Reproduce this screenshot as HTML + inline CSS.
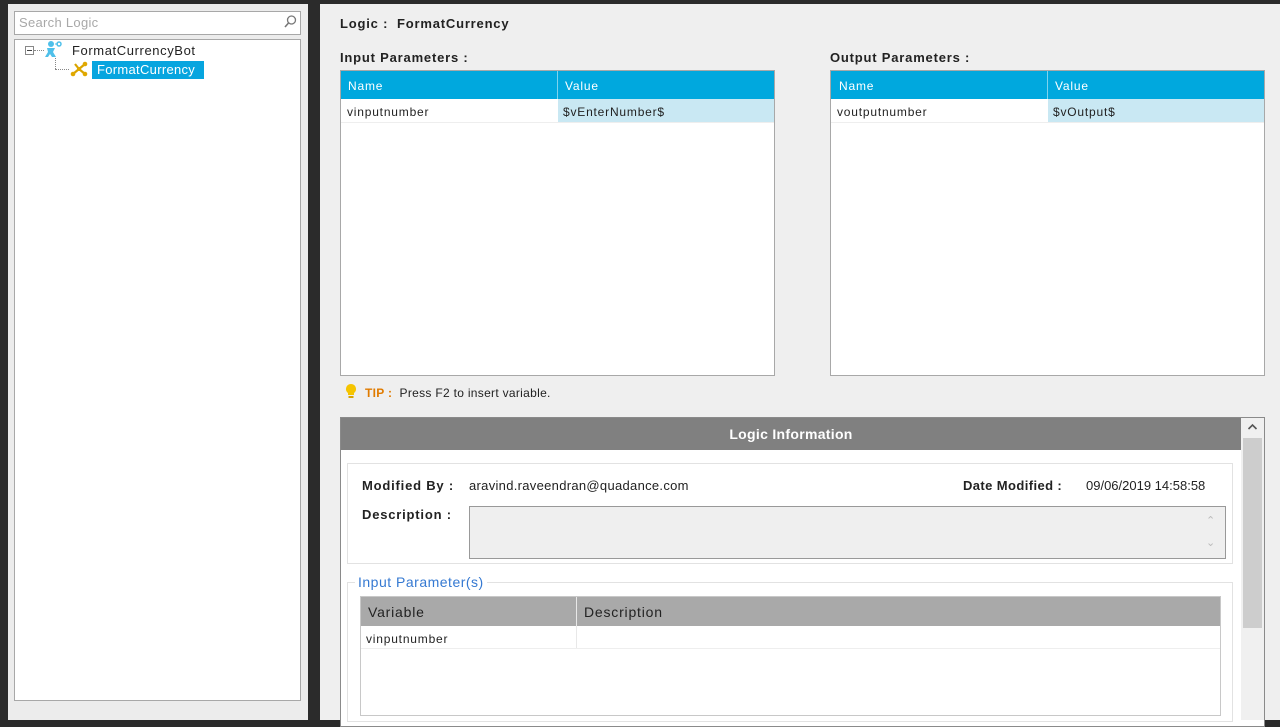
<!DOCTYPE html>
<html><head><meta charset="utf-8"><style>
*{box-sizing:border-box;margin:0;padding:0}
body{width:1280px;height:720px;background:#2b2b2b;position:relative;overflow:hidden;font-family:"Liberation Sans",Arial,sans-serif;font-size:12px;color:#222;letter-spacing:0.8px}
.a{position:absolute;white-space:nowrap}
.b{font-weight:bold}
</style></head><body>
<!-- left panel -->
<div class="a" style="left:8px;top:4px;width:300px;height:716px;background:#ececec"></div>
<div class="a" style="left:14px;top:11px;width:287px;height:24px;background:#fff;border:1px solid #a8a8a8"></div>
<div class="a" style="left:19px;top:15px;color:#a8a8a8;font-size:13px;letter-spacing:0.3px">Search Logic</div>
<svg class="a" style="left:283px;top:14px" width="14" height="16" viewBox="0 0 14 16"><circle cx="8.5" cy="6" r="4" fill="none" stroke="#777" stroke-width="1.3"/><path d="M5.5 9 L2 13" stroke="#777" stroke-width="1.6"/></svg>
<div class="a" style="left:14px;top:39px;width:287px;height:662px;background:#fff;border:1px solid #a8a8a8"></div>
<div class="a" style="left:25px;top:46px;width:9px;height:9px;border:1px solid #888;background:#fff"></div>
<div class="a" style="left:27px;top:50px;width:5px;height:1px;background:#444"></div>
<div class="a" style="left:34px;top:50px;width:10px;border-top:1px dotted #888"></div>
<svg class="a" style="left:43px;top:40px" width="22" height="18" viewBox="0 0 22 18"><circle cx="8" cy="4" r="3" fill="#4fc0ea"/><path d="M4 8h8l-2 4 3 5H9l-2-3-2 3H2l3-5z" fill="#4fc0ea"/><circle cx="16" cy="4" r="2" fill="none" stroke="#4fc0ea" stroke-width="1.5"/><path d="M12 4h3" stroke="#4fc0ea"/></svg>
<div class="a" style="left:72px;top:43px;font-size:13px;letter-spacing:0.6px">FormatCurrencyBot</div>
<div class="a" style="left:55px;top:58px;height:11px;border-left:1px dotted #888"></div>
<div class="a" style="left:55px;top:69px;width:14px;border-top:1px dotted #888"></div>
<svg class="a" style="left:70px;top:61px" width="18" height="16" viewBox="0 0 18 16"><path d="M3 13L9 8L15 3M9 8L15 13M9 8L5 3" stroke="#d9a400" stroke-width="2.2"/><circle cx="3" cy="13" r="2.3" fill="#e0a800"/><circle cx="15" cy="3" r="2.3" fill="#e0a800"/><circle cx="15" cy="13" r="2.3" fill="#e0a800"/><circle cx="9" cy="8" r="2" fill="#e0a800"/></svg>
<div class="a" style="left:92px;top:61px;width:112px;height:18px;background:#07a5df;color:#fff;font-size:13px;padding:1px 0 0 5px;letter-spacing:0.3px">FormatCurrency</div>
<!-- right panel -->
<div class="a" style="left:320px;top:4px;width:960px;height:716px;background:#efefef"></div>
<div class="a b" style="left:340px;top:16px;font-size:13px">Logic :&nbsp; FormatCurrency</div>
<div class="a b" style="left:340px;top:50px;font-size:13px">Input Parameters :</div>
<div class="a b" style="left:830px;top:50px;font-size:13px">Output Parameters :</div>
<!-- input table -->
<div class="a" style="left:340px;top:70px;width:435px;height:306px;background:#fff;border:1px solid #a8a8a8"></div>
<div class="a" style="left:341px;top:71px;width:433px;height:28px;background:#00a8de"></div>
<div class="a" style="left:557px;top:71px;width:1px;height:28px;background:#7fd3ee"></div>
<div class="a" style="left:348px;top:79px;color:#fff">Name</div>
<div class="a" style="left:565px;top:79px;color:#fff">Value</div>
<div class="a" style="left:558px;top:99px;width:216px;height:23px;background:#c9e8f3"></div>
<div class="a" style="left:341px;top:122px;width:433px;height:1px;background:#eee"></div>
<div class="a" style="left:347px;top:105px">vinputnumber</div>
<div class="a" style="left:563px;top:105px">$vEnterNumber$</div>
<!-- output table -->
<div class="a" style="left:830px;top:70px;width:435px;height:306px;background:#fff;border:1px solid #a8a8a8"></div>
<div class="a" style="left:831px;top:71px;width:433px;height:28px;background:#00a8de"></div>
<div class="a" style="left:1047px;top:71px;width:1px;height:28px;background:#7fd3ee"></div>
<div class="a" style="left:839px;top:79px;color:#fff">Name</div>
<div class="a" style="left:1055px;top:79px;color:#fff">Value</div>
<div class="a" style="left:1048px;top:99px;width:216px;height:23px;background:#c9e8f3"></div>
<div class="a" style="left:831px;top:122px;width:433px;height:1px;background:#eee"></div>
<div class="a" style="left:837px;top:105px">voutputnumber</div>
<div class="a" style="left:1053px;top:105px">$vOutput$</div>
<!-- tip -->
<svg class="a" style="left:345px;top:383px" width="12" height="16" viewBox="0 0 12 16"><path d="M6 1a5 5 0 0 0-3 9v2h6v-2a5 5 0 0 0-3-9z" fill="#f5c400"/><rect x="3.5" y="13" width="5" height="2" fill="#d9a400"/></svg>
<div class="a" style="left:365px;top:386px;letter-spacing:0.3px"><span class="b" style="color:#e07b00">TIP :</span>&nbsp; Press F2 to insert variable.</div>
<!-- logic info -->
<div class="a" style="left:340px;top:417px;width:925px;height:310px;background:#fff;border:1px solid #8a8a8a"></div>
<div class="a b" style="left:341px;top:418px;width:900px;height:32px;background:#808080;color:#fff;font-size:14px;text-align:center;line-height:33px;letter-spacing:0.3px">Logic Information</div>
<div class="a" style="left:1241px;top:418px;width:23px;height:302px;background:#f0f0f0"></div>
<div class="a" style="left:1243px;top:438px;width:19px;height:190px;background:#cdcdcd"></div>
<svg class="a" style="left:1247px;top:423px" width="11" height="8" viewBox="0 0 11 8"><path d="M1.5 6L5.5 2L9.5 6" fill="none" stroke="#555" stroke-width="1.6"/></svg>
<div class="a" style="left:347px;top:463px;width:886px;height:101px;border:1px solid #e2e2e2"></div>
<div class="a b" style="left:362px;top:478px;font-size:13px">Modified By :</div>
<div class="a" style="left:469px;top:478px;font-size:13px;letter-spacing:0.3px">aravind.raveendran@quadance.com</div>
<div class="a b" style="left:963px;top:478px;font-size:13px;letter-spacing:0.4px">Date Modified :</div>
<div class="a" style="left:1086px;top:478px;font-size:13px;letter-spacing:0px">09/06/2019 14:58:58</div>
<div class="a b" style="left:362px;top:507px;font-size:13px">Description :</div>
<div class="a" style="left:469px;top:506px;width:757px;height:53px;background:#efefef;border:1px solid #999"></div>
<div class="a" style="left:1206px;top:514px;color:#bbb;font-size:11px">&#8963;</div>
<div class="a" style="left:1206px;top:536px;color:#bbb;font-size:11px">&#8964;</div>
<div class="a" style="left:347px;top:582px;width:886px;height:140px;border:1px solid #e2e2e2"></div>
<div class="a" style="left:355px;top:574px;background:#fff;color:#3579d2;font-size:14px;padding:0 3px;letter-spacing:0.5px">Input Parameter(s)</div>
<div class="a" style="left:360px;top:596px;width:861px;height:120px;border:1px solid #c8c8c8;background:#fff"></div>
<div class="a" style="left:361px;top:597px;width:859px;height:29px;background:#a9a9a9"></div>
<div class="a" style="left:576px;top:597px;width:1px;height:51px;background:#e8e8e8"></div>
<div class="a" style="left:368px;top:604px;font-size:14px">Variable</div>
<div class="a" style="left:584px;top:604px;font-size:14px">Description</div>
<div class="a" style="left:361px;top:648px;width:859px;height:1px;background:#eee"></div>
<div class="a" style="left:366px;top:632px;font-size:12px">vinputnumber</div>
</body></html>
